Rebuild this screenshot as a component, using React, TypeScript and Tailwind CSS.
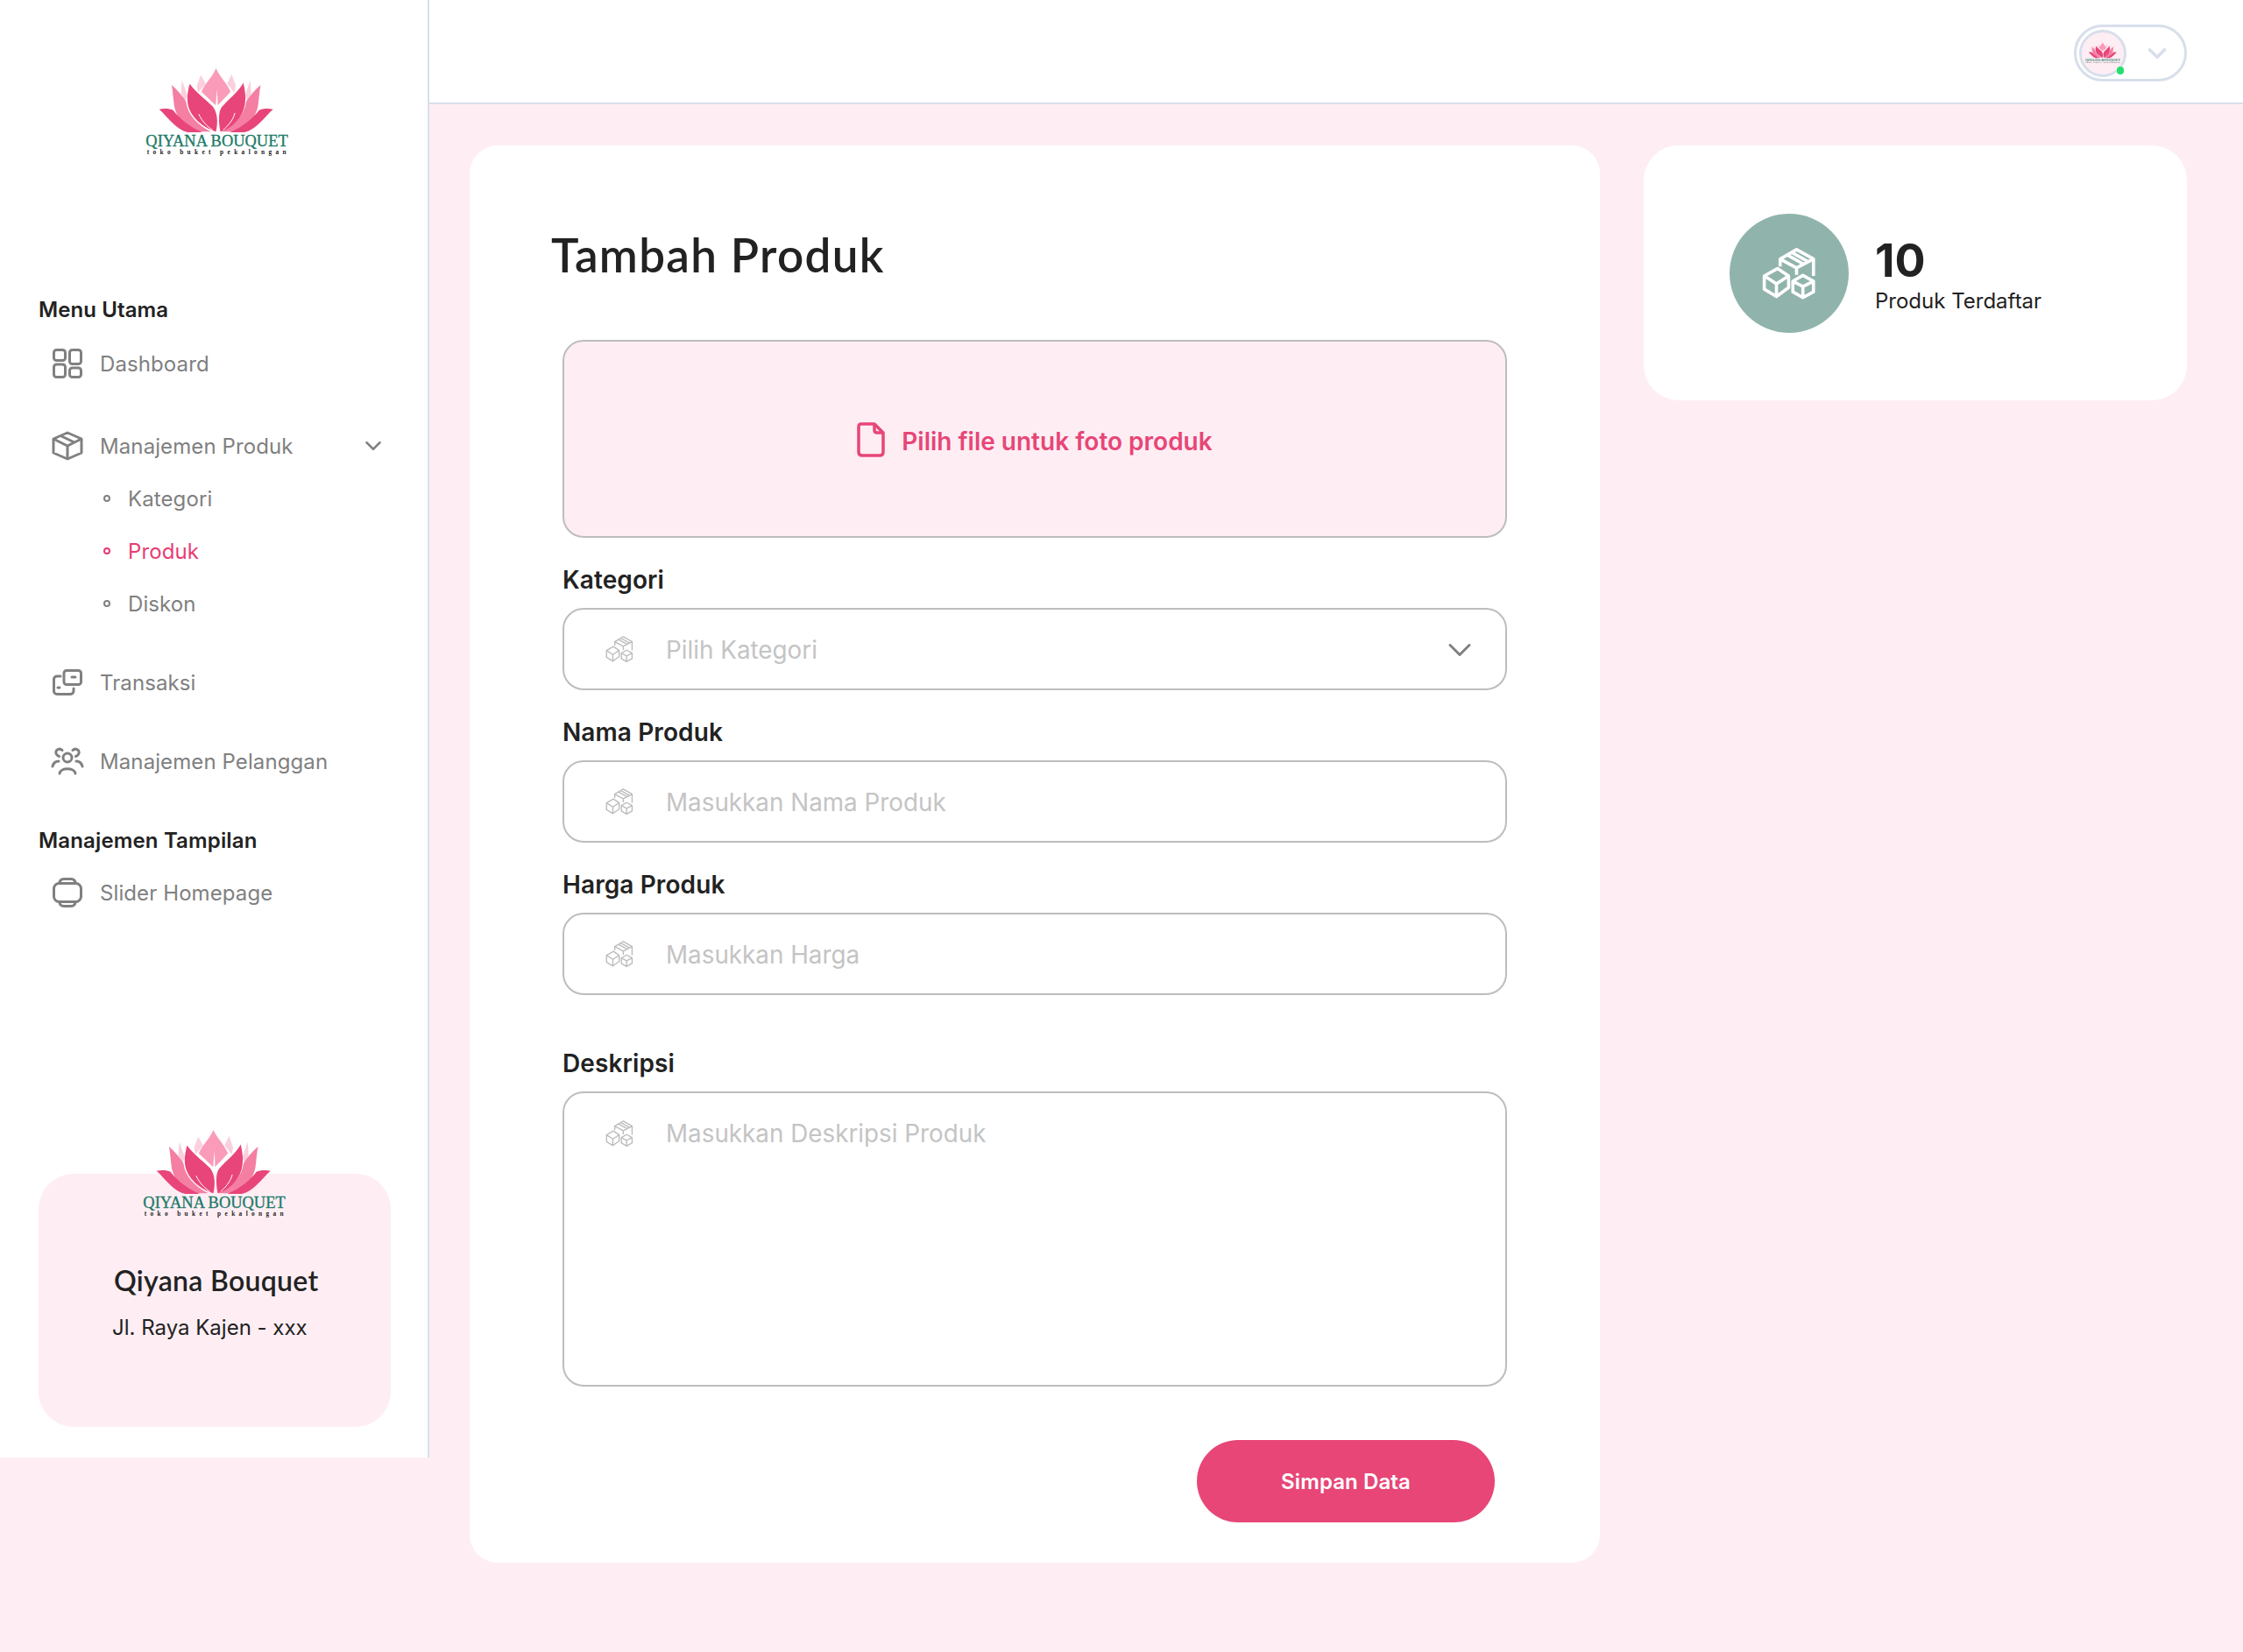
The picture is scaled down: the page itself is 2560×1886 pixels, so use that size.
import React from 'react';
import { ChevronDown } from 'lucide-react';

function Logo({ className }: { className?: string }) {
  return (
    <svg viewBox="45 55 490 300" className={className}>
      {/* back petals */}
      <path d="M170 95 L190 150 L180 170 L167 140 Z" fill="#fbd0de" />
      <path d="M405 95 L386 150 L396 170 L408 140 Z" fill="#fbd0de" />
      <path d="M235 78 L252 108 L226 138 L221 115 Z" fill="#fbd0de" />
      <path d="M341 75 L325 108 L350 138 L355 115 Z" fill="#fbd0de" />
      <path d="M287 55 C300 85 325 105 337 135 L293 182 L291 125 L286 182 L237 135 C250 105 275 85 287 55 Z" fill="#f99bb9" />
      {/* side petals */}
      <path d="M135 112 C155 130 172 150 184 168 C190 215 225 250 270 272 L212 272 C170 245 145 215 142 170 C140 150 138 130 135 112 Z" fill="#f47fa3" />
      <path d="M440 112 C420 130 403 150 391 168 C385 215 350 250 305 272 L363 272 C405 245 430 215 433 170 C435 150 437 130 440 112 Z" fill="#f47fa3" />
      {/* wings */}
      <path d="M92 195 C110 192 128 193 140 198 C160 225 195 255 240 274 L190 274 C150 265 125 225 92 195 Z" fill="#e8457a" />
      <path d="M483 195 C465 192 447 193 435 198 C415 225 380 255 335 274 L385 274 C425 265 450 225 483 195 Z" fill="#e8457a" />
      {/* front petals */}
      <path d="M197 108 C215 135 250 160 275 185 C292 205 295 240 287 272 C250 262 205 230 192 185 C186 160 190 130 197 108 Z" fill="#e8457a" />
      <path d="M381 104 C365 135 325 165 305 190 C296 205 295 235 302 272 C340 262 378 225 386 180 C390 155 387 130 381 104 Z" fill="#e8457a" />
      <path d="M228 212 C240 238 258 255 275 266" fill="none" stroke="#fff" strokeWidth="3" />
      <path d="M352 208 C345 235 325 255 312 266" fill="none" stroke="#fff" strokeWidth="3" />
      <text x="46" y="322" textLength="488" lengthAdjust="spacingAndGlyphs" fontSize="56" stroke="#1c7a68" strokeWidth="1" fill="#1c7a68" className="font-['Liberation_Serif',serif]">
        QIYANA BOUQUET
      </text>
      <text x="50" y="349" textLength="478" fontSize="22" fontWeight="700" fill="#222" className="font-['Liberation_Serif',serif]">
        toko buket pekalongan
      </text>
    </svg>
  );
}

function BoxesIcon({ className, weight = 4.5 }: { className?: string; weight?: number }) {
  return (
    <svg viewBox="86 74 106 102" fill="none" stroke="currentColor" strokeWidth={weight} strokeLinejoin="round" className={className}>
      <path d="M122 112V98L153 80L185 98V130M122 98L153 115L185 98M153 115V128M135 90L167 108M143 85L175 103" />
      <path d="M92 130L117 116L138 130V152L115 169L92 155ZM92 130L115 145L138 130M115 145V169" />
      <path d="M146 140L165 129L185 140V160L165 171L146 160ZM146 140L165 150L185 140M165 150V171" />
    </svg>
  );
}

function DashboardIcon() {
  return (
    <svg viewBox="0 0 34 34" fill="none" stroke="currentColor" strokeWidth="3" className="w-[34px] h-[34px]">
      <rect x="1.5" y="1.5" width="13" height="12" rx="3" />
      <rect x="19.5" y="1.5" width="13" height="16" rx="3" />
      <rect x="1.5" y="18" width="13" height="14.5" rx="3" />
      <rect x="19.5" y="22" width="13" height="10.5" rx="3" />
    </svg>
  );
}

function BoxIcon() {
  return (
    <svg viewBox="0 0 36 34" fill="none" stroke="currentColor" strokeWidth="3" strokeLinejoin="round" className="w-[36px] h-[34px]">
      <path d="M18 2L34 9V25L18 32L2 25V9Z" />
      <path d="M2 9L18 17L34 9M18 17V32M10 5.5L26 13" />
    </svg>
  );
}

function CardIcon() {
  return (
    <svg viewBox="0 0 34 30" fill="none" stroke="currentColor" strokeWidth="3" strokeLinecap="round" className="w-[34px] h-[30px]">
      <rect x="13" y="1.5" width="19.5" height="16" rx="3" />
      <path d="M22 9H26" />
      <path d="M9 8H5C3 8 1.5 9.5 1.5 11.5V25C1.5 27 3 28.5 5 28.5H20C22 28.5 24 27 24 25V22" />
      <path d="M6 21H8" />
    </svg>
  );
}

function UsersIcon() {
  return (
    <svg viewBox="0 0 38 32" fill="none" stroke="currentColor" strokeWidth="3" strokeLinecap="round" className="w-[38px] h-[32px]">
      <circle cx="19" cy="12" r="5" />
      <path d="M10 30C11 23 27 23 28 30" />
      <path d="M13 3.5C10 0.5 5 3 6 7C6.5 9 8 10 9.5 10.5" />
      <path d="M25 3.5C28 0.5 33 3 32 7C31.5 9 30 10 28.5 10.5" />
      <path d="M2 22C3 18 6 16 9 16" />
      <path d="M36 22C35 18 32 16 29 16" />
    </svg>
  );
}

function SliderIcon() {
  return (
    <svg viewBox="0 0 34 34" fill="none" stroke="currentColor" strokeWidth="3" strokeLinecap="round" className="w-[34px] h-[34px]">
      <rect x="1.5" y="6.5" width="31" height="21" rx="6" />
      <path d="M8 6.5C8 3 10 1.5 13 1.5H21C24 1.5 26 3 26 6.5" />
      <path d="M8 27.5C8 31 10 32.5 13 32.5H21C24 32.5 26 31 26 27.5" />
    </svg>
  );
}

function FileIcon() {
  return (
    <svg viewBox="0 0 32 40" fill="none" stroke="currentColor" strokeWidth="3.5" strokeLinejoin="round" className="w-[32px] h-[40px]">
      <path d="M5 2H20L30 12V34C30 36.5 28.5 38 26 38H6C3.5 38 2 36.5 2 34V5C2 3 3 2 5 2Z" />
      <path d="M20 2V9C20 11 21 12 23 12H30" />
    </svg>
  );
}

function MenuItem({ icon, label, className }: { icon: React.ReactNode; label: string; className: string }) {
  return (
    <div className={`flex items-center h-[36px] pl-[58px] text-[24px] tracking-[0.1px] text-[#808080] ${className}`}>
      <span className="w-[38px] flex justify-center">{icon}</span>
      <span className="ml-[18px] pt-[2px]">{label}</span>
    </div>
  );
}

function SubItem({ label, active, className }: { label: string; active?: boolean; className: string }) {
  return (
    <div className={`flex items-center h-[30px] pl-[118px] text-[24px] tracking-[0.1px] ${active ? 'text-[#e73c73]' : 'text-[#808080]'} ${className}`}>
      <span className="w-[8px] h-[8px] rounded-full border-2 border-current" />
      <span className="ml-[20px] pt-[2px]">{label}</span>
    </div>
  );
}

function Sidebar() {
  return (
    <aside className="w-[490px] h-[1664px] shrink-0 bg-white border-r-2 border-[#d8dfeb] flex flex-col pt-[78px] pb-[35px]">
      <Logo className="w-[163px] h-[100px] ml-[166px]" />
      <h3 className="mt-[161px] ml-[44px] h-[30px] leading-[30px] text-[24px] font-semibold tracking-[0.1px] text-[#222]">Menu Utama</h3>
      <MenuItem icon={<DashboardIcon />} label="Dashboard" className="mt-[28px]" />
      <div className="relative mt-[58px]">
        <MenuItem icon={<BoxIcon />} label="Manajemen Produk" className="" />
        <ChevronDown className="absolute left-[410px] top-[3px] w-[32px] h-[30px] text-[#808080]" strokeWidth={2} />
      </div>
      <SubItem label="Kategori" className="mt-[27px]" />
      <SubItem label="Produk" active className="mt-[30px]" />
      <SubItem label="Diskon" className="mt-[30px]" />
      <MenuItem icon={<CardIcon />} label="Transaksi" className="mt-[57px]" />
      <MenuItem icon={<UsersIcon />} label="Manajemen Pelanggan" className="mt-[54px]" />
      <h3 className="mt-[58px] ml-[44px] h-[30px] leading-[30px] text-[24px] font-semibold tracking-[0.15px] text-[#222]">Manajemen Tampilan</h3>
      <MenuItem icon={<SliderIcon />} label="Slider Homepage" className="mt-[26px]" />

      <div className="mt-auto mx-[44px] w-[402px] h-[289px] rounded-[40px] bg-[#feeef4] flex flex-col">
        <Logo className="w-[163px] h-[100px] -mt-[50px] ml-[119px]" />
        <div className="mt-[52px] ml-[86px] h-[40px] leading-[40px] text-[32px] font-semibold tracking-[0.3px] text-[#222] font-['Lato',sans-serif]">Qiyana Bouquet</div>
        <div className="mt-[17px] ml-[84px] h-[34px] leading-[34px] text-[24px] text-[#222]">Jl. Raya Kajen - xxx</div>
      </div>
    </aside>
  );
}

function FieldLabel({ children, className }: { children: React.ReactNode; className: string }) {
  return <label className={`block h-[34px] leading-[34px] text-[28px] font-semibold tracking-[0.1px] text-[#222] ${className}`}>{children}</label>;
}

function TextField({ placeholder, select }: { placeholder: string; select?: boolean }) {
  return (
    <div className="mt-[15px] h-[94px] rounded-[24px] border-2 border-[#bdbdbd] flex items-center pl-[46px] pr-[30px]">
      <BoxesIcon className="w-[34px] h-[32px] text-[#bdbdbd]" />
      <span className="ml-[36px] pt-[3px] text-[27.8px] text-[#c4c4c4]">{placeholder}</span>
      {select && <ChevronDown className="ml-auto mt-[2px] w-[44px] h-[44px] text-[#808080]" strokeWidth={1.6} />}
    </div>
  );
}

export default function App() {
  return (
    <div className="flex min-h-[1886px] bg-[#feeef4] font-['Inter',sans-serif]">
      <Sidebar />
      <div className="flex-1 flex flex-col">
        <header className="h-[119px] bg-white border-b-2 border-[#d8dfeb] flex justify-end items-start pt-[28px] pr-[64px]">
          <div className="w-[129px] h-[65px] rounded-full border-[3px] border-[#d8dfeb] flex items-center pl-[3px]">
            <div className="relative w-[54px] h-[54px] rounded-full border-[3px] border-[#d8dfeb] bg-[#feeef4] flex items-center justify-center">
              <Logo className="w-[40px] h-[25px]" />
              <span className="absolute right-[0px] bottom-[0px] w-[8px] h-[9px] rounded-full bg-[#22e06b]" />
            </div>
            <ChevronDown className="ml-[18px] w-[34px] h-[34px] text-[#d8dfeb]" strokeWidth={2.5} />
          </div>
        </header>

        <main className="flex items-start gap-[50px] pt-[47px] pl-[46px]">
          <section className="w-[1290px] h-[1618px] bg-white rounded-[32px] pt-[95px] pl-[93px]">
            <h1 className="h-[60px] leading-[60px] text-[53px] font-semibold tracking-[1.3px] text-[#222] font-['Lato',sans-serif]">Tambah Produk</h1>
            <div className="ml-[13px] w-[1078px]">
              <div className="mt-[67px] h-[226px] rounded-[24px] border-2 border-[#bdbdbd] bg-[#feeef4] flex items-center justify-center gap-[19px] text-[#e74677] pt-[2px]">
                <FileIcon />
                <span className="pt-[4px] text-[28px] font-semibold">Pilih file untuk foto produk</span>
              </div>
              <FieldLabel className="mt-[31px]">Kategori</FieldLabel>
              <TextField placeholder="Pilih Kategori" select />
              <FieldLabel className="mt-[31px]">Nama Produk</FieldLabel>
              <TextField placeholder="Masukkan Nama Produk" />
              <FieldLabel className="mt-[31px]">Harga Produk</FieldLabel>
              <TextField placeholder="Masukkan Harga" />
              <FieldLabel className="mt-[61px]">Deskripsi</FieldLabel>
              <div className="mt-[15px] h-[337px] rounded-[24px] border-2 border-[#bdbdbd] flex items-start pt-[30px] pl-[46px]">
                <div className="flex items-center h-[32px]">
                  <BoxesIcon className="w-[34px] h-[32px] text-[#bdbdbd]" />
                  <span className="ml-[36px] pt-[1px] text-[27.8px] text-[#c4c4c4]">Masukkan Deskripsi Produk</span>
                </div>
              </div>
              <div className="mt-[61px] flex justify-end pr-[14px]">
                <button className="w-[340px] h-[94px] rounded-full bg-[#e74677] pt-[2px] text-white text-[24px] font-semibold tracking-[0.1px]">Simpan Data</button>
              </div>
            </div>
          </section>

          <aside className="w-[620px] h-[291px] bg-white rounded-[40px] flex items-center pl-[98px]">
            <div className="w-[136px] h-[136px] rounded-full bg-[#90b4ac] flex items-center justify-center">
              <BoxesIcon className="w-[64px] h-[62px] text-white" weight={6} />
            </div>
            <div className="ml-[30px] pt-[10px]">
              <div className="h-[50px] leading-[50px] pt-[1px] text-[52px] font-bold text-[#222]">10</div>
              <div className="mt-[4px] text-[24px] text-[#222]">Produk Terdaftar</div>
            </div>
          </aside>
        </main>
      </div>
    </div>
  );
}
